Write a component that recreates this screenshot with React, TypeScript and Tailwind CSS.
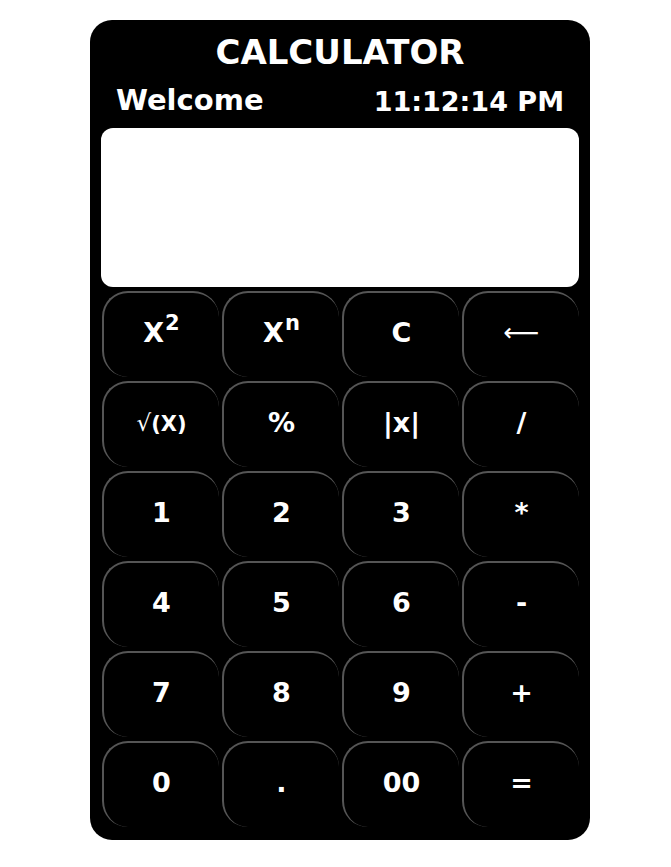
import React from "react";

const keys: React.ReactNode[] = [
  <span>
    X<sup className="text-[21px] -top-[0.55em] ml-[1px]">2</sup>
  </span>,
  <span>
    X<sup className="text-[21px] -top-[0.55em] ml-[1px]">n</sup>
  </span>,
  "C",
  <span className="font-normal text-[25px]">⟵</span>,
  <span className="text-[21px]">
    <span className="font-normal text-[23px]">√</span>(X)
  </span>,
  "%",
  "|x|",
  "/",
  "1",
  "2",
  "3",
  "*",
  "4",
  "5",
  "6",
  "-",
  "7",
  "8",
  "9",
  "+",
  "0",
  ".",
  "00",
  "=",
];

export default function App() {
  return (
    <div
      className="min-h-[867px] bg-white pt-5"
      style={{ fontFamily: '"DejaVu Sans", sans-serif' }}
    >
      <div className="ml-[90px] w-[500px] h-[820px] bg-black rounded-[22px] px-[11px] pb-[14px] text-white">
        <h1 className="text-center text-[34px] font-bold leading-none pt-[15px] h-[63px]">
          CALCULATOR
        </h1>
        <div className="flex justify-between items-end px-[15px] font-bold leading-none h-[45px] pb-[13px]">
          <span className="text-[29px]">Welcome</span>
          <span className="text-[27px]">11:12:14 PM</span>
        </div>
        <div className="h-[159px] bg-white rounded-[12px]"></div>
        <div className="grid grid-cols-4 gap-x-[2px] mt-[4px]">
          {keys.map((k, i) => (
            <button
              key={i}
              className="h-[86px] mb-[4px] ml-[1px] pb-[4px] rounded-[26px] border-t-2 border-l-2 border-[#555] text-[27px] font-bold flex items-center justify-center"
            >
              {k}
            </button>
          ))}
        </div>
      </div>
    </div>
  );
}
